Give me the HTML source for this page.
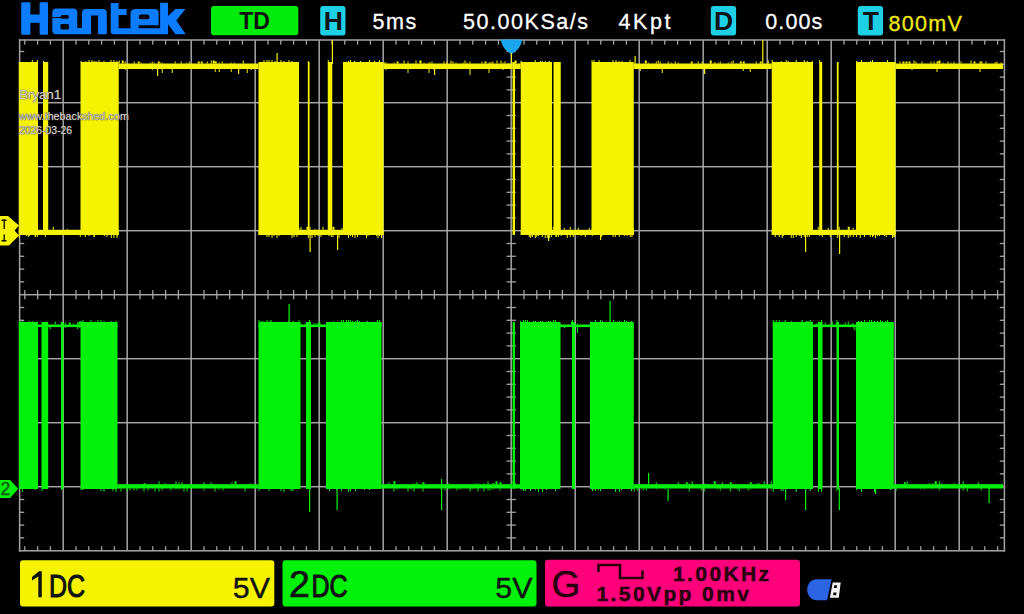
<!DOCTYPE html>
<html><head><meta charset="utf-8"><title>Hantek scope</title>
<style>html,body{margin:0;padding:0;background:#000;width:1024px;height:614px;overflow:hidden}</style>
</head><body><svg width='1024' height='614' viewBox='0 0 1024 614' style='display:block'><g fill='#a4a4a4'><rect x='18.85' y='39.25' width='986.30' height='1.50'/><rect x='18.85' y='550.05' width='986.30' height='1.50'/><rect x='18.85' y='39.25' width='1.50' height='512.30'/><rect x='1003.65' y='39.25' width='1.50' height='512.30'/><rect x='62.45' y='40.00' width='1.50' height='510.80'/><rect x='126.45' y='40.00' width='1.50' height='510.80'/><rect x='190.45' y='40.00' width='1.50' height='510.80'/><rect x='254.45' y='40.00' width='1.50' height='510.80'/><rect x='318.45' y='40.00' width='1.50' height='510.80'/><rect x='382.45' y='40.00' width='1.50' height='510.80'/><rect x='446.45' y='40.00' width='1.50' height='510.80'/><rect x='510.45' y='40.00' width='1.50' height='510.80'/><rect x='574.45' y='40.00' width='1.50' height='510.80'/><rect x='638.45' y='40.00' width='1.50' height='510.80'/><rect x='702.45' y='40.00' width='1.50' height='510.80'/><rect x='766.45' y='40.00' width='1.50' height='510.80'/><rect x='830.45' y='40.00' width='1.50' height='510.80'/><rect x='894.45' y='40.00' width='1.50' height='510.80'/><rect x='958.45' y='40.00' width='1.50' height='510.80'/><rect x='19.60' y='101.95' width='984.80' height='1.50'/><rect x='19.60' y='165.95' width='984.80' height='1.50'/><rect x='19.60' y='229.95' width='984.80' height='1.50'/><rect x='19.60' y='293.95' width='984.80' height='1.50'/><rect x='19.60' y='357.95' width='984.80' height='1.50'/><rect x='19.60' y='421.95' width='984.80' height='1.50'/><rect x='19.60' y='485.95' width='984.80' height='1.50'/><rect x='24.15' y='40.00' width='1.30' height='4.60'/><rect x='24.15' y='546.20' width='1.30' height='4.60'/><rect x='24.15' y='290.10' width='1.30' height='9.20'/><rect x='36.95' y='40.00' width='1.30' height='4.60'/><rect x='36.95' y='546.20' width='1.30' height='4.60'/><rect x='36.95' y='290.10' width='1.30' height='9.20'/><rect x='49.75' y='40.00' width='1.30' height='4.60'/><rect x='49.75' y='546.20' width='1.30' height='4.60'/><rect x='49.75' y='290.10' width='1.30' height='9.20'/><rect x='75.35' y='40.00' width='1.30' height='4.60'/><rect x='75.35' y='546.20' width='1.30' height='4.60'/><rect x='75.35' y='290.10' width='1.30' height='9.20'/><rect x='88.15' y='40.00' width='1.30' height='4.60'/><rect x='88.15' y='546.20' width='1.30' height='4.60'/><rect x='88.15' y='290.10' width='1.30' height='9.20'/><rect x='100.95' y='40.00' width='1.30' height='4.60'/><rect x='100.95' y='546.20' width='1.30' height='4.60'/><rect x='100.95' y='290.10' width='1.30' height='9.20'/><rect x='113.75' y='40.00' width='1.30' height='4.60'/><rect x='113.75' y='546.20' width='1.30' height='4.60'/><rect x='113.75' y='290.10' width='1.30' height='9.20'/><rect x='139.35' y='40.00' width='1.30' height='4.60'/><rect x='139.35' y='546.20' width='1.30' height='4.60'/><rect x='139.35' y='290.10' width='1.30' height='9.20'/><rect x='152.15' y='40.00' width='1.30' height='4.60'/><rect x='152.15' y='546.20' width='1.30' height='4.60'/><rect x='152.15' y='290.10' width='1.30' height='9.20'/><rect x='164.95' y='40.00' width='1.30' height='4.60'/><rect x='164.95' y='546.20' width='1.30' height='4.60'/><rect x='164.95' y='290.10' width='1.30' height='9.20'/><rect x='177.75' y='40.00' width='1.30' height='4.60'/><rect x='177.75' y='546.20' width='1.30' height='4.60'/><rect x='177.75' y='290.10' width='1.30' height='9.20'/><rect x='203.35' y='40.00' width='1.30' height='4.60'/><rect x='203.35' y='546.20' width='1.30' height='4.60'/><rect x='203.35' y='290.10' width='1.30' height='9.20'/><rect x='216.15' y='40.00' width='1.30' height='4.60'/><rect x='216.15' y='546.20' width='1.30' height='4.60'/><rect x='216.15' y='290.10' width='1.30' height='9.20'/><rect x='228.95' y='40.00' width='1.30' height='4.60'/><rect x='228.95' y='546.20' width='1.30' height='4.60'/><rect x='228.95' y='290.10' width='1.30' height='9.20'/><rect x='241.75' y='40.00' width='1.30' height='4.60'/><rect x='241.75' y='546.20' width='1.30' height='4.60'/><rect x='241.75' y='290.10' width='1.30' height='9.20'/><rect x='267.35' y='40.00' width='1.30' height='4.60'/><rect x='267.35' y='546.20' width='1.30' height='4.60'/><rect x='267.35' y='290.10' width='1.30' height='9.20'/><rect x='280.15' y='40.00' width='1.30' height='4.60'/><rect x='280.15' y='546.20' width='1.30' height='4.60'/><rect x='280.15' y='290.10' width='1.30' height='9.20'/><rect x='292.95' y='40.00' width='1.30' height='4.60'/><rect x='292.95' y='546.20' width='1.30' height='4.60'/><rect x='292.95' y='290.10' width='1.30' height='9.20'/><rect x='305.75' y='40.00' width='1.30' height='4.60'/><rect x='305.75' y='546.20' width='1.30' height='4.60'/><rect x='305.75' y='290.10' width='1.30' height='9.20'/><rect x='331.35' y='40.00' width='1.30' height='4.60'/><rect x='331.35' y='546.20' width='1.30' height='4.60'/><rect x='331.35' y='290.10' width='1.30' height='9.20'/><rect x='344.15' y='40.00' width='1.30' height='4.60'/><rect x='344.15' y='546.20' width='1.30' height='4.60'/><rect x='344.15' y='290.10' width='1.30' height='9.20'/><rect x='356.95' y='40.00' width='1.30' height='4.60'/><rect x='356.95' y='546.20' width='1.30' height='4.60'/><rect x='356.95' y='290.10' width='1.30' height='9.20'/><rect x='369.75' y='40.00' width='1.30' height='4.60'/><rect x='369.75' y='546.20' width='1.30' height='4.60'/><rect x='369.75' y='290.10' width='1.30' height='9.20'/><rect x='395.35' y='40.00' width='1.30' height='4.60'/><rect x='395.35' y='546.20' width='1.30' height='4.60'/><rect x='395.35' y='290.10' width='1.30' height='9.20'/><rect x='408.15' y='40.00' width='1.30' height='4.60'/><rect x='408.15' y='546.20' width='1.30' height='4.60'/><rect x='408.15' y='290.10' width='1.30' height='9.20'/><rect x='420.95' y='40.00' width='1.30' height='4.60'/><rect x='420.95' y='546.20' width='1.30' height='4.60'/><rect x='420.95' y='290.10' width='1.30' height='9.20'/><rect x='433.75' y='40.00' width='1.30' height='4.60'/><rect x='433.75' y='546.20' width='1.30' height='4.60'/><rect x='433.75' y='290.10' width='1.30' height='9.20'/><rect x='459.35' y='40.00' width='1.30' height='4.60'/><rect x='459.35' y='546.20' width='1.30' height='4.60'/><rect x='459.35' y='290.10' width='1.30' height='9.20'/><rect x='472.15' y='40.00' width='1.30' height='4.60'/><rect x='472.15' y='546.20' width='1.30' height='4.60'/><rect x='472.15' y='290.10' width='1.30' height='9.20'/><rect x='484.95' y='40.00' width='1.30' height='4.60'/><rect x='484.95' y='546.20' width='1.30' height='4.60'/><rect x='484.95' y='290.10' width='1.30' height='9.20'/><rect x='497.75' y='40.00' width='1.30' height='4.60'/><rect x='497.75' y='546.20' width='1.30' height='4.60'/><rect x='497.75' y='290.10' width='1.30' height='9.20'/><rect x='523.35' y='40.00' width='1.30' height='4.60'/><rect x='523.35' y='546.20' width='1.30' height='4.60'/><rect x='523.35' y='290.10' width='1.30' height='9.20'/><rect x='536.15' y='40.00' width='1.30' height='4.60'/><rect x='536.15' y='546.20' width='1.30' height='4.60'/><rect x='536.15' y='290.10' width='1.30' height='9.20'/><rect x='548.95' y='40.00' width='1.30' height='4.60'/><rect x='548.95' y='546.20' width='1.30' height='4.60'/><rect x='548.95' y='290.10' width='1.30' height='9.20'/><rect x='561.75' y='40.00' width='1.30' height='4.60'/><rect x='561.75' y='546.20' width='1.30' height='4.60'/><rect x='561.75' y='290.10' width='1.30' height='9.20'/><rect x='587.35' y='40.00' width='1.30' height='4.60'/><rect x='587.35' y='546.20' width='1.30' height='4.60'/><rect x='587.35' y='290.10' width='1.30' height='9.20'/><rect x='600.15' y='40.00' width='1.30' height='4.60'/><rect x='600.15' y='546.20' width='1.30' height='4.60'/><rect x='600.15' y='290.10' width='1.30' height='9.20'/><rect x='612.95' y='40.00' width='1.30' height='4.60'/><rect x='612.95' y='546.20' width='1.30' height='4.60'/><rect x='612.95' y='290.10' width='1.30' height='9.20'/><rect x='625.75' y='40.00' width='1.30' height='4.60'/><rect x='625.75' y='546.20' width='1.30' height='4.60'/><rect x='625.75' y='290.10' width='1.30' height='9.20'/><rect x='651.35' y='40.00' width='1.30' height='4.60'/><rect x='651.35' y='546.20' width='1.30' height='4.60'/><rect x='651.35' y='290.10' width='1.30' height='9.20'/><rect x='664.15' y='40.00' width='1.30' height='4.60'/><rect x='664.15' y='546.20' width='1.30' height='4.60'/><rect x='664.15' y='290.10' width='1.30' height='9.20'/><rect x='676.95' y='40.00' width='1.30' height='4.60'/><rect x='676.95' y='546.20' width='1.30' height='4.60'/><rect x='676.95' y='290.10' width='1.30' height='9.20'/><rect x='689.75' y='40.00' width='1.30' height='4.60'/><rect x='689.75' y='546.20' width='1.30' height='4.60'/><rect x='689.75' y='290.10' width='1.30' height='9.20'/><rect x='715.35' y='40.00' width='1.30' height='4.60'/><rect x='715.35' y='546.20' width='1.30' height='4.60'/><rect x='715.35' y='290.10' width='1.30' height='9.20'/><rect x='728.15' y='40.00' width='1.30' height='4.60'/><rect x='728.15' y='546.20' width='1.30' height='4.60'/><rect x='728.15' y='290.10' width='1.30' height='9.20'/><rect x='740.95' y='40.00' width='1.30' height='4.60'/><rect x='740.95' y='546.20' width='1.30' height='4.60'/><rect x='740.95' y='290.10' width='1.30' height='9.20'/><rect x='753.75' y='40.00' width='1.30' height='4.60'/><rect x='753.75' y='546.20' width='1.30' height='4.60'/><rect x='753.75' y='290.10' width='1.30' height='9.20'/><rect x='779.35' y='40.00' width='1.30' height='4.60'/><rect x='779.35' y='546.20' width='1.30' height='4.60'/><rect x='779.35' y='290.10' width='1.30' height='9.20'/><rect x='792.15' y='40.00' width='1.30' height='4.60'/><rect x='792.15' y='546.20' width='1.30' height='4.60'/><rect x='792.15' y='290.10' width='1.30' height='9.20'/><rect x='804.95' y='40.00' width='1.30' height='4.60'/><rect x='804.95' y='546.20' width='1.30' height='4.60'/><rect x='804.95' y='290.10' width='1.30' height='9.20'/><rect x='817.75' y='40.00' width='1.30' height='4.60'/><rect x='817.75' y='546.20' width='1.30' height='4.60'/><rect x='817.75' y='290.10' width='1.30' height='9.20'/><rect x='843.35' y='40.00' width='1.30' height='4.60'/><rect x='843.35' y='546.20' width='1.30' height='4.60'/><rect x='843.35' y='290.10' width='1.30' height='9.20'/><rect x='856.15' y='40.00' width='1.30' height='4.60'/><rect x='856.15' y='546.20' width='1.30' height='4.60'/><rect x='856.15' y='290.10' width='1.30' height='9.20'/><rect x='868.95' y='40.00' width='1.30' height='4.60'/><rect x='868.95' y='546.20' width='1.30' height='4.60'/><rect x='868.95' y='290.10' width='1.30' height='9.20'/><rect x='881.75' y='40.00' width='1.30' height='4.60'/><rect x='881.75' y='546.20' width='1.30' height='4.60'/><rect x='881.75' y='290.10' width='1.30' height='9.20'/><rect x='907.35' y='40.00' width='1.30' height='4.60'/><rect x='907.35' y='546.20' width='1.30' height='4.60'/><rect x='907.35' y='290.10' width='1.30' height='9.20'/><rect x='920.15' y='40.00' width='1.30' height='4.60'/><rect x='920.15' y='546.20' width='1.30' height='4.60'/><rect x='920.15' y='290.10' width='1.30' height='9.20'/><rect x='932.95' y='40.00' width='1.30' height='4.60'/><rect x='932.95' y='546.20' width='1.30' height='4.60'/><rect x='932.95' y='290.10' width='1.30' height='9.20'/><rect x='945.75' y='40.00' width='1.30' height='4.60'/><rect x='945.75' y='546.20' width='1.30' height='4.60'/><rect x='945.75' y='290.10' width='1.30' height='9.20'/><rect x='971.35' y='40.00' width='1.30' height='4.60'/><rect x='971.35' y='546.20' width='1.30' height='4.60'/><rect x='971.35' y='290.10' width='1.30' height='9.20'/><rect x='984.15' y='40.00' width='1.30' height='4.60'/><rect x='984.15' y='546.20' width='1.30' height='4.60'/><rect x='984.15' y='290.10' width='1.30' height='9.20'/><rect x='996.95' y='40.00' width='1.30' height='4.60'/><rect x='996.95' y='546.20' width='1.30' height='4.60'/><rect x='996.95' y='290.10' width='1.30' height='9.20'/><rect x='19.60' y='50.85' width='4.60' height='1.30'/><rect x='999.80' y='50.85' width='4.60' height='1.30'/><rect x='506.60' y='50.85' width='9.20' height='1.30'/><rect x='19.60' y='63.65' width='4.60' height='1.30'/><rect x='999.80' y='63.65' width='4.60' height='1.30'/><rect x='506.60' y='63.65' width='9.20' height='1.30'/><rect x='19.60' y='76.45' width='4.60' height='1.30'/><rect x='999.80' y='76.45' width='4.60' height='1.30'/><rect x='506.60' y='76.45' width='9.20' height='1.30'/><rect x='19.60' y='89.25' width='4.60' height='1.30'/><rect x='999.80' y='89.25' width='4.60' height='1.30'/><rect x='506.60' y='89.25' width='9.20' height='1.30'/><rect x='19.60' y='114.85' width='4.60' height='1.30'/><rect x='999.80' y='114.85' width='4.60' height='1.30'/><rect x='506.60' y='114.85' width='9.20' height='1.30'/><rect x='19.60' y='127.65' width='4.60' height='1.30'/><rect x='999.80' y='127.65' width='4.60' height='1.30'/><rect x='506.60' y='127.65' width='9.20' height='1.30'/><rect x='19.60' y='140.45' width='4.60' height='1.30'/><rect x='999.80' y='140.45' width='4.60' height='1.30'/><rect x='506.60' y='140.45' width='9.20' height='1.30'/><rect x='19.60' y='153.25' width='4.60' height='1.30'/><rect x='999.80' y='153.25' width='4.60' height='1.30'/><rect x='506.60' y='153.25' width='9.20' height='1.30'/><rect x='19.60' y='178.85' width='4.60' height='1.30'/><rect x='999.80' y='178.85' width='4.60' height='1.30'/><rect x='506.60' y='178.85' width='9.20' height='1.30'/><rect x='19.60' y='191.65' width='4.60' height='1.30'/><rect x='999.80' y='191.65' width='4.60' height='1.30'/><rect x='506.60' y='191.65' width='9.20' height='1.30'/><rect x='19.60' y='204.45' width='4.60' height='1.30'/><rect x='999.80' y='204.45' width='4.60' height='1.30'/><rect x='506.60' y='204.45' width='9.20' height='1.30'/><rect x='19.60' y='217.25' width='4.60' height='1.30'/><rect x='999.80' y='217.25' width='4.60' height='1.30'/><rect x='506.60' y='217.25' width='9.20' height='1.30'/><rect x='19.60' y='242.85' width='4.60' height='1.30'/><rect x='999.80' y='242.85' width='4.60' height='1.30'/><rect x='506.60' y='242.85' width='9.20' height='1.30'/><rect x='19.60' y='255.65' width='4.60' height='1.30'/><rect x='999.80' y='255.65' width='4.60' height='1.30'/><rect x='506.60' y='255.65' width='9.20' height='1.30'/><rect x='19.60' y='268.45' width='4.60' height='1.30'/><rect x='999.80' y='268.45' width='4.60' height='1.30'/><rect x='506.60' y='268.45' width='9.20' height='1.30'/><rect x='19.60' y='281.25' width='4.60' height='1.30'/><rect x='999.80' y='281.25' width='4.60' height='1.30'/><rect x='506.60' y='281.25' width='9.20' height='1.30'/><rect x='19.60' y='306.85' width='4.60' height='1.30'/><rect x='999.80' y='306.85' width='4.60' height='1.30'/><rect x='506.60' y='306.85' width='9.20' height='1.30'/><rect x='19.60' y='319.65' width='4.60' height='1.30'/><rect x='999.80' y='319.65' width='4.60' height='1.30'/><rect x='506.60' y='319.65' width='9.20' height='1.30'/><rect x='19.60' y='332.45' width='4.60' height='1.30'/><rect x='999.80' y='332.45' width='4.60' height='1.30'/><rect x='506.60' y='332.45' width='9.20' height='1.30'/><rect x='19.60' y='345.25' width='4.60' height='1.30'/><rect x='999.80' y='345.25' width='4.60' height='1.30'/><rect x='506.60' y='345.25' width='9.20' height='1.30'/><rect x='19.60' y='370.85' width='4.60' height='1.30'/><rect x='999.80' y='370.85' width='4.60' height='1.30'/><rect x='506.60' y='370.85' width='9.20' height='1.30'/><rect x='19.60' y='383.65' width='4.60' height='1.30'/><rect x='999.80' y='383.65' width='4.60' height='1.30'/><rect x='506.60' y='383.65' width='9.20' height='1.30'/><rect x='19.60' y='396.45' width='4.60' height='1.30'/><rect x='999.80' y='396.45' width='4.60' height='1.30'/><rect x='506.60' y='396.45' width='9.20' height='1.30'/><rect x='19.60' y='409.25' width='4.60' height='1.30'/><rect x='999.80' y='409.25' width='4.60' height='1.30'/><rect x='506.60' y='409.25' width='9.20' height='1.30'/><rect x='19.60' y='434.85' width='4.60' height='1.30'/><rect x='999.80' y='434.85' width='4.60' height='1.30'/><rect x='506.60' y='434.85' width='9.20' height='1.30'/><rect x='19.60' y='447.65' width='4.60' height='1.30'/><rect x='999.80' y='447.65' width='4.60' height='1.30'/><rect x='506.60' y='447.65' width='9.20' height='1.30'/><rect x='19.60' y='460.45' width='4.60' height='1.30'/><rect x='999.80' y='460.45' width='4.60' height='1.30'/><rect x='506.60' y='460.45' width='9.20' height='1.30'/><rect x='19.60' y='473.25' width='4.60' height='1.30'/><rect x='999.80' y='473.25' width='4.60' height='1.30'/><rect x='506.60' y='473.25' width='9.20' height='1.30'/><rect x='19.60' y='498.85' width='4.60' height='1.30'/><rect x='999.80' y='498.85' width='4.60' height='1.30'/><rect x='506.60' y='498.85' width='9.20' height='1.30'/><rect x='19.60' y='511.65' width='4.60' height='1.30'/><rect x='999.80' y='511.65' width='4.60' height='1.30'/><rect x='506.60' y='511.65' width='9.20' height='1.30'/><rect x='19.60' y='524.45' width='4.60' height='1.30'/><rect x='999.80' y='524.45' width='4.60' height='1.30'/><rect x='506.60' y='524.45' width='9.20' height='1.30'/><rect x='19.60' y='537.25' width='4.60' height='1.30'/><rect x='999.80' y='537.25' width='4.60' height='1.30'/><rect x='506.60' y='537.25' width='9.20' height='1.30'/></g><g fill='#f5f300'><rect x='118.75' y='63.50' width='139.75' height='5.50'/><rect x='118.75' y='60.50' width='1.00' height='3.00'/><rect x='121.75' y='60.50' width='2.00' height='3.00'/><rect x='124.75' y='61.50' width='1.00' height='2.00'/><rect x='124.75' y='69.00' width='1.00' height='1.00'/><rect x='133.75' y='61.50' width='1.00' height='2.00'/><rect x='137.75' y='61.50' width='2.00' height='2.00'/><rect x='140.75' y='62.50' width='1.00' height='1.00'/><rect x='149.75' y='62.50' width='1.00' height='1.00'/><rect x='151.75' y='61.50' width='1.00' height='2.00'/><rect x='151.75' y='69.00' width='1.00' height='1.00'/><rect x='153.75' y='62.50' width='1.00' height='1.00'/><rect x='157.75' y='61.50' width='2.00' height='2.00'/><rect x='159.75' y='62.50' width='1.00' height='1.00'/><rect x='161.75' y='62.50' width='1.00' height='1.00'/><rect x='161.75' y='69.00' width='1.00' height='4.00'/><rect x='171.75' y='69.00' width='1.00' height='4.00'/><rect x='174.75' y='61.50' width='1.00' height='2.00'/><rect x='180.75' y='61.50' width='1.00' height='2.00'/><rect x='185.75' y='62.50' width='1.00' height='1.00'/><rect x='188.75' y='61.50' width='1.00' height='2.00'/><rect x='197.75' y='61.50' width='2.00' height='2.00'/><rect x='200.75' y='61.50' width='2.00' height='2.00'/><rect x='206.75' y='61.50' width='1.00' height='2.00'/><rect x='210.75' y='60.50' width='1.00' height='3.00'/><rect x='212.75' y='60.50' width='2.00' height='3.00'/><rect x='214.75' y='61.50' width='2.00' height='2.00'/><rect x='214.75' y='69.00' width='1.00' height='3.00'/><rect x='218.75' y='62.50' width='1.00' height='1.00'/><rect x='218.75' y='69.00' width='1.00' height='3.00'/><rect x='221.75' y='61.50' width='1.00' height='2.00'/><rect x='230.75' y='62.50' width='1.00' height='1.00'/><rect x='230.75' y='69.00' width='1.00' height='3.00'/><rect x='233.75' y='62.50' width='1.00' height='1.00'/><rect x='242.75' y='60.50' width='1.00' height='3.00'/><rect x='246.75' y='69.00' width='1.00' height='4.00'/><rect x='250.75' y='69.00' width='1.00' height='1.00'/><rect x='383.50' y='63.50' width='129.10' height='5.50'/><rect x='383.50' y='62.50' width='2.00' height='1.00'/><rect x='385.50' y='62.50' width='1.00' height='1.00'/><rect x='385.50' y='69.00' width='1.00' height='1.00'/><rect x='393.50' y='62.50' width='1.00' height='1.00'/><rect x='396.50' y='61.50' width='2.00' height='2.00'/><rect x='403.50' y='60.50' width='1.00' height='3.00'/><rect x='407.50' y='61.50' width='1.00' height='2.00'/><rect x='407.50' y='69.00' width='1.00' height='4.00'/><rect x='415.50' y='60.50' width='1.00' height='3.00'/><rect x='419.50' y='60.50' width='2.00' height='3.00'/><rect x='423.50' y='62.50' width='1.00' height='1.00'/><rect x='428.50' y='62.50' width='2.00' height='1.00'/><rect x='428.50' y='69.00' width='1.00' height='4.00'/><rect x='431.50' y='61.50' width='1.00' height='2.00'/><rect x='433.50' y='69.00' width='1.00' height='1.00'/><rect x='443.50' y='61.50' width='1.00' height='2.00'/><rect x='446.50' y='61.50' width='1.00' height='2.00'/><rect x='450.50' y='60.50' width='1.00' height='3.00'/><rect x='452.50' y='61.50' width='1.00' height='2.00'/><rect x='455.50' y='62.50' width='1.00' height='1.00'/><rect x='462.50' y='62.50' width='1.00' height='1.00'/><rect x='464.50' y='60.50' width='1.00' height='3.00'/><rect x='466.50' y='62.50' width='1.00' height='1.00'/><rect x='469.50' y='61.50' width='1.00' height='2.00'/><rect x='469.50' y='69.00' width='1.00' height='6.00'/><rect x='481.50' y='61.50' width='1.00' height='2.00'/><rect x='484.50' y='61.50' width='2.00' height='2.00'/><rect x='488.50' y='62.50' width='2.00' height='1.00'/><rect x='488.50' y='69.00' width='1.00' height='4.00'/><rect x='490.50' y='62.50' width='2.00' height='1.00'/><rect x='492.50' y='61.50' width='1.00' height='2.00'/><rect x='496.50' y='60.50' width='1.00' height='3.00'/><rect x='500.50' y='60.50' width='1.00' height='3.00'/><rect x='502.50' y='62.50' width='1.00' height='1.00'/><rect x='502.50' y='69.00' width='1.00' height='1.00'/><rect x='504.50' y='61.50' width='1.00' height='2.00'/><rect x='511.50' y='62.50' width='2.00' height='1.00'/><rect x='512.60' y='63.50' width='8.15' height='5.50'/><rect x='514.60' y='60.50' width='2.00' height='3.00'/><rect x='520.60' y='61.50' width='1.00' height='2.00'/><rect x='633.75' y='63.50' width='138.00' height='5.50'/><rect x='639.75' y='69.00' width='1.00' height='2.00'/><rect x='644.75' y='60.50' width='2.00' height='3.00'/><rect x='647.75' y='62.50' width='1.00' height='1.00'/><rect x='655.75' y='61.50' width='1.00' height='2.00'/><rect x='657.75' y='60.50' width='1.00' height='3.00'/><rect x='659.75' y='61.50' width='1.00' height='2.00'/><rect x='661.75' y='69.00' width='1.00' height='4.00'/><rect x='667.75' y='61.50' width='1.00' height='2.00'/><rect x='670.75' y='62.50' width='1.00' height='1.00'/><rect x='674.75' y='61.50' width='1.00' height='2.00'/><rect x='677.75' y='62.50' width='1.00' height='1.00'/><rect x='690.75' y='61.50' width='2.00' height='2.00'/><rect x='697.75' y='61.50' width='1.00' height='2.00'/><rect x='701.75' y='61.50' width='1.00' height='2.00'/><rect x='709.75' y='60.50' width='2.00' height='3.00'/><rect x='713.75' y='62.50' width='2.00' height='1.00'/><rect x='717.75' y='62.50' width='1.00' height='1.00'/><rect x='719.75' y='61.50' width='1.00' height='2.00'/><rect x='727.75' y='62.50' width='1.00' height='1.00'/><rect x='730.75' y='61.50' width='1.00' height='2.00'/><rect x='732.75' y='60.50' width='1.00' height='3.00'/><rect x='739.75' y='61.50' width='2.00' height='2.00'/><rect x='742.75' y='61.50' width='2.00' height='2.00'/><rect x='742.75' y='69.00' width='1.00' height='2.00'/><rect x='749.75' y='69.00' width='1.00' height='3.00'/><rect x='755.75' y='61.50' width='1.00' height='2.00'/><rect x='759.75' y='61.50' width='2.00' height='2.00'/><rect x='767.75' y='60.50' width='1.00' height='3.00'/><rect x='895.50' y='63.50' width='107.50' height='5.50'/><rect x='899.50' y='61.50' width='1.00' height='2.00'/><rect x='902.50' y='61.50' width='2.00' height='2.00'/><rect x='905.50' y='61.50' width='2.00' height='2.00'/><rect x='908.50' y='61.50' width='2.00' height='2.00'/><rect x='911.50' y='69.00' width='1.00' height='1.00'/><rect x='913.50' y='60.50' width='1.00' height='3.00'/><rect x='915.50' y='61.50' width='1.00' height='2.00'/><rect x='921.50' y='61.50' width='1.00' height='2.00'/><rect x='930.50' y='61.50' width='1.00' height='2.00'/><rect x='933.50' y='61.50' width='1.00' height='2.00'/><rect x='936.50' y='61.50' width='2.00' height='2.00'/><rect x='936.50' y='69.00' width='1.00' height='3.00'/><rect x='938.50' y='60.50' width='2.00' height='3.00'/><rect x='942.50' y='62.50' width='1.00' height='1.00'/><rect x='947.50' y='61.50' width='1.00' height='2.00'/><rect x='950.50' y='62.50' width='1.00' height='1.00'/><rect x='953.50' y='61.50' width='1.00' height='2.00'/><rect x='960.50' y='61.50' width='1.00' height='2.00'/><rect x='970.50' y='60.50' width='1.00' height='3.00'/><rect x='973.50' y='61.50' width='2.00' height='2.00'/><rect x='979.50' y='61.50' width='2.00' height='2.00'/><rect x='979.50' y='69.00' width='1.00' height='3.00'/><rect x='981.50' y='61.50' width='1.00' height='2.00'/><rect x='985.50' y='61.50' width='1.00' height='2.00'/><rect x='994.50' y='62.50' width='2.00' height='1.00'/><rect x='996.50' y='61.50' width='1.00' height='2.00'/><rect x='1000.50' y='62.50' width='1.00' height='1.00'/><rect x='18.80' y='229.80' width='99.95' height='5.20'/><rect x='18.80' y='228.80' width='2.00' height='1.00'/><rect x='22.80' y='227.80' width='1.00' height='2.00'/><rect x='25.80' y='235.00' width='1.00' height='1.00'/><rect x='27.80' y='235.00' width='1.00' height='2.00'/><rect x='34.80' y='235.00' width='1.00' height='2.00'/><rect x='34.80' y='228.80' width='2.00' height='1.00'/><rect x='44.80' y='235.00' width='1.00' height='2.00'/><rect x='52.80' y='226.80' width='1.00' height='3.00'/><rect x='66.80' y='228.80' width='1.00' height='1.00'/><rect x='79.80' y='235.00' width='1.00' height='2.00'/><rect x='82.80' y='226.80' width='1.00' height='3.00'/><rect x='84.80' y='235.00' width='1.00' height='2.00'/><rect x='93.80' y='235.00' width='1.00' height='2.00'/><rect x='103.80' y='235.00' width='1.00' height='1.00'/><rect x='107.80' y='228.80' width='2.00' height='1.00'/><rect x='110.80' y='235.00' width='1.00' height='3.00'/><rect x='112.80' y='227.80' width='2.00' height='2.00'/><rect x='116.80' y='235.00' width='1.00' height='1.00'/><rect x='258.50' y='229.80' width='125.00' height='5.20'/><rect x='261.50' y='226.80' width='1.00' height='3.00'/><rect x='266.50' y='235.00' width='1.00' height='2.00'/><rect x='268.50' y='235.00' width='1.00' height='2.00'/><rect x='273.50' y='235.00' width='1.00' height='1.00'/><rect x='273.50' y='226.80' width='2.00' height='3.00'/><rect x='276.50' y='235.00' width='1.00' height='3.00'/><rect x='276.50' y='227.80' width='2.00' height='2.00'/><rect x='278.50' y='235.00' width='1.00' height='1.00'/><rect x='278.50' y='228.80' width='1.00' height='1.00'/><rect x='282.50' y='227.80' width='2.00' height='2.00'/><rect x='296.50' y='235.00' width='1.00' height='2.00'/><rect x='296.50' y='226.80' width='1.00' height='3.00'/><rect x='298.50' y='227.80' width='1.00' height='2.00'/><rect x='300.50' y='226.80' width='1.00' height='3.00'/><rect x='306.50' y='226.80' width='2.00' height='3.00'/><rect x='309.50' y='226.80' width='1.00' height='3.00'/><rect x='311.50' y='235.00' width='1.00' height='3.00'/><rect x='314.50' y='235.00' width='1.00' height='2.00'/><rect x='314.50' y='228.80' width='1.00' height='1.00'/><rect x='317.50' y='235.00' width='1.00' height='1.00'/><rect x='320.50' y='235.00' width='1.00' height='2.00'/><rect x='322.50' y='226.80' width='1.00' height='3.00'/><rect x='328.50' y='235.00' width='1.00' height='1.00'/><rect x='332.50' y='235.00' width='1.00' height='2.00'/><rect x='332.50' y='226.80' width='2.00' height='3.00'/><rect x='338.50' y='235.00' width='1.00' height='3.00'/><rect x='341.50' y='227.80' width='1.00' height='2.00'/><rect x='344.50' y='226.80' width='1.00' height='3.00'/><rect x='346.50' y='226.80' width='1.00' height='3.00'/><rect x='354.50' y='235.00' width='1.00' height='3.00'/><rect x='362.50' y='228.80' width='2.00' height='1.00'/><rect x='367.50' y='235.00' width='1.00' height='1.00'/><rect x='367.50' y='226.80' width='1.00' height='3.00'/><rect x='377.50' y='235.00' width='1.00' height='3.00'/><rect x='377.50' y='227.80' width='1.00' height='2.00'/><rect x='520.75' y='229.80' width='113.00' height='5.20'/><rect x='529.75' y='235.00' width='1.00' height='3.00'/><rect x='531.75' y='235.00' width='1.00' height='2.00'/><rect x='531.75' y='226.80' width='2.00' height='3.00'/><rect x='535.75' y='235.00' width='1.00' height='2.00'/><rect x='537.75' y='235.00' width='1.00' height='1.00'/><rect x='544.75' y='227.80' width='1.00' height='2.00'/><rect x='548.75' y='227.80' width='1.00' height='2.00'/><rect x='552.75' y='226.80' width='1.00' height='3.00'/><rect x='555.75' y='235.00' width='1.00' height='2.00'/><rect x='557.75' y='235.00' width='1.00' height='2.00'/><rect x='560.75' y='235.00' width='1.00' height='1.00'/><rect x='563.75' y='227.80' width='1.00' height='2.00'/><rect x='566.75' y='235.00' width='1.00' height='3.00'/><rect x='569.75' y='235.00' width='1.00' height='2.00'/><rect x='569.75' y='226.80' width='1.00' height='3.00'/><rect x='572.75' y='235.00' width='1.00' height='2.00'/><rect x='577.75' y='227.80' width='1.00' height='2.00'/><rect x='580.75' y='235.00' width='1.00' height='1.00'/><rect x='584.75' y='235.00' width='1.00' height='2.00'/><rect x='588.75' y='227.80' width='1.00' height='2.00'/><rect x='591.75' y='235.00' width='1.00' height='1.00'/><rect x='591.75' y='228.80' width='1.00' height='1.00'/><rect x='600.75' y='235.00' width='1.00' height='2.00'/><rect x='600.75' y='227.80' width='1.00' height='2.00'/><rect x='608.75' y='227.80' width='2.00' height='2.00'/><rect x='614.75' y='235.00' width='1.00' height='2.00'/><rect x='618.75' y='235.00' width='1.00' height='2.00'/><rect x='623.75' y='235.00' width='1.00' height='1.00'/><rect x='629.75' y='235.00' width='1.00' height='2.00'/><rect x='632.75' y='227.80' width='1.00' height='2.00'/><rect x='771.75' y='229.80' width='123.75' height='5.20'/><rect x='777.75' y='227.80' width='2.00' height='2.00'/><rect x='781.75' y='235.00' width='1.00' height='3.00'/><rect x='790.75' y='235.00' width='1.00' height='3.00'/><rect x='792.75' y='235.00' width='1.00' height='3.00'/><rect x='795.75' y='235.00' width='1.00' height='2.00'/><rect x='800.75' y='235.00' width='1.00' height='1.00'/><rect x='803.75' y='228.80' width='1.00' height='1.00'/><rect x='806.75' y='235.00' width='1.00' height='2.00'/><rect x='806.75' y='227.80' width='2.00' height='2.00'/><rect x='817.75' y='226.80' width='1.00' height='3.00'/><rect x='821.75' y='235.00' width='1.00' height='2.00'/><rect x='827.75' y='227.80' width='1.00' height='2.00'/><rect x='829.75' y='235.00' width='1.00' height='2.00'/><rect x='838.75' y='235.00' width='1.00' height='2.00'/><rect x='838.75' y='226.80' width='1.00' height='3.00'/><rect x='843.75' y='235.00' width='1.00' height='2.00'/><rect x='847.75' y='235.00' width='1.00' height='3.00'/><rect x='847.75' y='226.80' width='2.00' height='3.00'/><rect x='849.75' y='235.00' width='1.00' height='2.00'/><rect x='852.75' y='235.00' width='1.00' height='2.00'/><rect x='852.75' y='227.80' width='1.00' height='2.00'/><rect x='859.75' y='235.00' width='1.00' height='3.00'/><rect x='869.75' y='235.00' width='1.00' height='2.00'/><rect x='872.75' y='235.00' width='1.00' height='1.00'/><rect x='879.75' y='228.80' width='2.00' height='1.00'/><rect x='885.75' y='235.00' width='1.00' height='2.00'/><rect x='885.75' y='227.80' width='1.00' height='2.00'/><rect x='892.75' y='235.00' width='1.00' height='2.00'/><rect x='892.75' y='227.80' width='1.00' height='2.00'/><rect x='18.80' y='62.00' width='19.20' height='173.00'/><rect x='18.80' y='235.00' width='1.00' height='3.00'/><rect x='28.80' y='235.00' width='1.00' height='1.00'/><rect x='31.80' y='60.00' width='1.00' height='2.00'/><rect x='34.80' y='235.00' width='1.00' height='2.00'/><rect x='36.80' y='60.00' width='1.00' height='2.00'/><rect x='36.80' y='235.00' width='1.00' height='2.00'/><rect x='43.00' y='62.00' width='5.20' height='173.00'/><rect x='43.00' y='61.00' width='1.00' height='1.00'/><rect x='80.50' y='62.00' width='38.25' height='173.00'/><rect x='80.50' y='61.00' width='1.00' height='1.00'/><rect x='85.50' y='61.00' width='1.00' height='1.00'/><rect x='88.50' y='60.00' width='1.00' height='2.00'/><rect x='88.50' y='235.00' width='1.00' height='1.00'/><rect x='91.50' y='60.00' width='1.00' height='2.00'/><rect x='93.50' y='61.00' width='1.00' height='1.00'/><rect x='93.50' y='235.00' width='1.00' height='2.00'/><rect x='95.50' y='61.00' width='1.00' height='1.00'/><rect x='98.50' y='60.00' width='1.00' height='2.00'/><rect x='103.50' y='61.00' width='1.00' height='1.00'/><rect x='106.50' y='235.00' width='1.00' height='2.00'/><rect x='110.50' y='60.00' width='1.00' height='2.00'/><rect x='113.50' y='60.00' width='1.00' height='2.00'/><rect x='113.50' y='235.00' width='1.00' height='3.00'/><rect x='116.50' y='61.00' width='1.00' height='1.00'/><rect x='116.50' y='235.00' width='1.00' height='3.00'/><rect x='258.50' y='62.00' width='40.50' height='173.00'/><rect x='263.50' y='60.00' width='1.00' height='2.00'/><rect x='266.50' y='60.00' width='1.00' height='2.00'/><rect x='268.50' y='60.00' width='1.00' height='2.00'/><rect x='271.50' y='60.00' width='1.00' height='2.00'/><rect x='271.50' y='235.00' width='1.00' height='3.00'/><rect x='274.50' y='61.00' width='1.00' height='1.00'/><rect x='280.50' y='60.00' width='1.00' height='2.00'/><rect x='283.50' y='61.00' width='1.00' height='1.00'/><rect x='288.50' y='60.00' width='1.00' height='2.00'/><rect x='291.50' y='61.00' width='1.00' height='1.00'/><rect x='291.50' y='235.00' width='1.00' height='3.00'/><rect x='293.50' y='235.00' width='1.00' height='2.00'/><rect x='307.80' y='62.00' width='1.80' height='173.00'/><rect x='307.80' y='61.00' width='1.00' height='1.00'/><rect x='307.80' y='235.00' width='1.00' height='3.00'/><rect x='327.75' y='62.00' width='4.50' height='173.00'/><rect x='327.75' y='60.00' width='1.00' height='2.00'/><rect x='330.75' y='235.00' width='1.00' height='2.00'/><rect x='343.00' y='62.00' width='40.50' height='173.00'/><rect x='348.00' y='61.00' width='1.00' height='1.00'/><rect x='348.00' y='235.00' width='1.00' height='3.00'/><rect x='350.00' y='60.00' width='1.00' height='2.00'/><rect x='350.00' y='235.00' width='1.00' height='1.00'/><rect x='352.00' y='235.00' width='1.00' height='2.00'/><rect x='354.00' y='61.00' width='1.00' height='1.00'/><rect x='357.00' y='235.00' width='1.00' height='2.00'/><rect x='360.00' y='61.00' width='1.00' height='1.00'/><rect x='366.00' y='235.00' width='1.00' height='3.00'/><rect x='369.00' y='60.00' width='1.00' height='2.00'/><rect x='374.00' y='61.00' width='1.00' height='1.00'/><rect x='376.00' y='235.00' width='1.00' height='1.00'/><rect x='379.00' y='60.00' width='1.00' height='2.00'/><rect x='379.00' y='235.00' width='1.00' height='1.00'/><rect x='381.00' y='235.00' width='1.00' height='3.00'/><rect x='512.60' y='62.00' width='2.40' height='173.00'/><rect x='520.75' y='62.00' width='31.25' height='173.00'/><rect x='520.75' y='61.00' width='1.00' height='1.00'/><rect x='528.75' y='235.00' width='1.00' height='2.00'/><rect x='531.75' y='235.00' width='1.00' height='2.00'/><rect x='534.75' y='60.00' width='1.00' height='2.00'/><rect x='534.75' y='235.00' width='1.00' height='3.00'/><rect x='537.75' y='235.00' width='1.00' height='1.00'/><rect x='539.75' y='61.00' width='1.00' height='1.00'/><rect x='541.75' y='61.00' width='1.00' height='1.00'/><rect x='541.75' y='235.00' width='1.00' height='2.00'/><rect x='544.75' y='61.00' width='1.00' height='1.00'/><rect x='544.75' y='235.00' width='1.00' height='3.00'/><rect x='546.75' y='235.00' width='1.00' height='3.00'/><rect x='548.75' y='61.00' width='1.00' height='1.00'/><rect x='548.75' y='235.00' width='1.00' height='3.00'/><rect x='550.75' y='235.00' width='1.00' height='2.00'/><rect x='553.50' y='62.00' width='7.25' height='173.00'/><rect x='555.50' y='235.00' width='1.00' height='2.00'/><rect x='591.50' y='62.00' width='42.25' height='173.00'/><rect x='591.50' y='60.00' width='1.00' height='2.00'/><rect x='593.50' y='60.00' width='1.00' height='2.00'/><rect x='598.50' y='60.00' width='1.00' height='2.00'/><rect x='601.50' y='235.00' width='1.00' height='1.00'/><rect x='612.50' y='60.00' width='1.00' height='2.00'/><rect x='612.50' y='235.00' width='1.00' height='2.00'/><rect x='615.50' y='60.00' width='1.00' height='2.00'/><rect x='618.50' y='61.00' width='1.00' height='1.00'/><rect x='621.50' y='61.00' width='1.00' height='1.00'/><rect x='626.50' y='235.00' width='1.00' height='1.00'/><rect x='629.50' y='60.00' width='1.00' height='2.00'/><rect x='631.50' y='235.00' width='1.00' height='2.00'/><rect x='771.75' y='62.00' width='41.25' height='173.00'/><rect x='771.75' y='60.00' width='1.00' height='2.00'/><rect x='774.75' y='235.00' width='1.00' height='2.00'/><rect x='778.75' y='235.00' width='1.00' height='2.00'/><rect x='780.75' y='61.00' width='1.00' height='1.00'/><rect x='782.75' y='235.00' width='1.00' height='1.00'/><rect x='785.75' y='60.00' width='1.00' height='2.00'/><rect x='787.75' y='61.00' width='1.00' height='1.00'/><rect x='795.75' y='60.00' width='1.00' height='2.00'/><rect x='798.75' y='235.00' width='1.00' height='1.00'/><rect x='800.75' y='235.00' width='1.00' height='3.00'/><rect x='803.75' y='60.00' width='1.00' height='2.00'/><rect x='803.75' y='235.00' width='1.00' height='2.00'/><rect x='806.75' y='61.00' width='1.00' height='1.00'/><rect x='808.75' y='235.00' width='1.00' height='2.00'/><rect x='811.75' y='61.00' width='1.00' height='1.00'/><rect x='819.20' y='62.00' width='3.00' height='173.00'/><rect x='819.20' y='60.00' width='1.00' height='2.00'/><rect x='819.20' y='235.00' width='1.00' height='1.00'/><rect x='836.80' y='62.00' width='1.80' height='173.00'/><rect x='836.80' y='235.00' width='1.00' height='3.00'/><rect x='856.00' y='62.00' width='39.50' height='173.00'/><rect x='856.00' y='61.00' width='1.00' height='1.00'/><rect x='856.00' y='235.00' width='1.00' height='2.00'/><rect x='861.00' y='60.00' width='1.00' height='2.00'/><rect x='864.00' y='235.00' width='1.00' height='2.00'/><rect x='870.00' y='61.00' width='1.00' height='1.00'/><rect x='872.00' y='60.00' width='1.00' height='2.00'/><rect x='872.00' y='235.00' width='1.00' height='2.00'/><rect x='875.00' y='235.00' width='1.00' height='3.00'/><rect x='877.00' y='235.00' width='1.00' height='1.00'/><rect x='879.00' y='235.00' width='1.00' height='1.00'/><rect x='884.00' y='235.00' width='1.00' height='1.00'/><rect x='887.00' y='60.00' width='1.00' height='2.00'/><rect x='892.00' y='235.00' width='1.00' height='3.00'/><rect x='894.00' y='235.00' width='1.00' height='2.00'/><rect x='276.50' y='53.00' width='1.20' height='11.00'/><rect x='331.80' y='40.00' width='1.20' height='24.00'/><rect x='762.20' y='40.00' width='1.20' height='24.00'/><rect x='634.50' y='56.00' width='1.20' height='8.00'/><rect x='309.50' y='235.00' width='1.20' height='17.00'/><rect x='337.00' y='235.00' width='1.20' height='15.00'/><rect x='805.00' y='235.00' width='1.20' height='17.00'/><rect x='839.00' y='235.00' width='1.20' height='19.00'/><rect x='157.00' y='69.00' width='1.20' height='7.00'/><rect x='238.00' y='69.00' width='1.20' height='5.00'/><rect x='330.00' y='69.00' width='1.20' height='7.00'/><rect x='434.00' y='69.00' width='1.20' height='6.00'/><rect x='704.00' y='69.00' width='1.20' height='5.00'/><rect x='880.00' y='69.00' width='1.20' height='4.00'/><rect x='548.00' y='235.00' width='1.20' height='6.00'/><rect x='600.00' y='235.00' width='1.20' height='5.00'/></g><g fill='#00f20a'><rect x='18.80' y='324.50' width='98.70' height='2.60'/><rect x='20.80' y='322.50' width='1.00' height='2.00'/><rect x='23.80' y='322.50' width='1.00' height='2.00'/><rect x='28.80' y='321.50' width='1.00' height='3.00'/><rect x='28.80' y='327.10' width='1.00' height='4.00'/><rect x='49.80' y='327.10' width='1.00' height='2.00'/><rect x='54.80' y='321.50' width='1.00' height='3.00'/><rect x='64.80' y='322.50' width='1.00' height='2.00'/><rect x='64.80' y='327.10' width='1.00' height='1.00'/><rect x='68.80' y='322.50' width='2.00' height='2.00'/><rect x='72.80' y='323.50' width='1.00' height='1.00'/><rect x='76.80' y='322.50' width='2.00' height='2.00'/><rect x='76.80' y='327.10' width='1.00' height='2.00'/><rect x='78.80' y='321.50' width='2.00' height='3.00'/><rect x='78.80' y='327.10' width='1.00' height='1.00'/><rect x='82.80' y='323.50' width='1.00' height='1.00'/><rect x='88.80' y='323.50' width='2.00' height='1.00'/><rect x='94.80' y='321.50' width='1.00' height='3.00'/><rect x='106.80' y='322.50' width='2.00' height='2.00'/><rect x='110.80' y='323.50' width='1.00' height='1.00'/><rect x='110.80' y='327.10' width='1.00' height='2.00'/><rect x='258.50' y='324.50' width='123.00' height='2.60'/><rect x='258.50' y='323.50' width='1.00' height='1.00'/><rect x='260.50' y='321.50' width='1.00' height='3.00'/><rect x='263.50' y='321.50' width='1.00' height='3.00'/><rect x='268.50' y='321.50' width='2.00' height='3.00'/><rect x='270.50' y='322.50' width='1.00' height='2.00'/><rect x='273.50' y='322.50' width='1.00' height='2.00'/><rect x='275.50' y='323.50' width='1.00' height='1.00'/><rect x='283.50' y='322.50' width='1.00' height='2.00'/><rect x='290.50' y='323.50' width='1.00' height='1.00'/><rect x='293.50' y='327.10' width='1.00' height='3.00'/><rect x='300.50' y='323.50' width='1.00' height='1.00'/><rect x='304.50' y='323.50' width='1.00' height='1.00'/><rect x='313.50' y='323.50' width='2.00' height='1.00'/><rect x='316.50' y='323.50' width='2.00' height='1.00'/><rect x='318.50' y='322.50' width='2.00' height='2.00'/><rect x='326.50' y='322.50' width='1.00' height='2.00'/><rect x='326.50' y='327.10' width='1.00' height='2.00'/><rect x='332.50' y='321.50' width='2.00' height='3.00'/><rect x='338.50' y='322.50' width='1.00' height='2.00'/><rect x='341.50' y='327.10' width='1.00' height='4.00'/><rect x='347.50' y='321.50' width='1.00' height='3.00'/><rect x='347.50' y='327.10' width='1.00' height='3.00'/><rect x='351.50' y='322.50' width='2.00' height='2.00'/><rect x='354.50' y='322.50' width='1.00' height='2.00'/><rect x='375.50' y='321.50' width='1.00' height='3.00'/><rect x='375.50' y='327.10' width='1.00' height='1.00'/><rect x='379.50' y='322.50' width='2.00' height='2.00'/><rect x='379.50' y='327.10' width='1.00' height='6.00'/><rect x='520.00' y='324.50' width='113.75' height='2.60'/><rect x='524.00' y='323.50' width='1.00' height='1.00'/><rect x='532.00' y='322.50' width='1.00' height='2.00'/><rect x='535.00' y='322.50' width='1.00' height='2.00'/><rect x='538.00' y='323.50' width='1.00' height='1.00'/><rect x='541.00' y='322.50' width='2.00' height='2.00'/><rect x='544.00' y='327.10' width='1.00' height='6.00'/><rect x='550.00' y='322.50' width='2.00' height='2.00'/><rect x='554.00' y='327.10' width='1.00' height='2.00'/><rect x='558.00' y='322.50' width='1.00' height='2.00'/><rect x='564.00' y='327.10' width='1.00' height='1.00'/><rect x='571.00' y='321.50' width='1.00' height='3.00'/><rect x='577.00' y='323.50' width='1.00' height='1.00'/><rect x='577.00' y='327.10' width='1.00' height='6.00'/><rect x='590.00' y='321.50' width='1.00' height='3.00'/><rect x='590.00' y='327.10' width='1.00' height='6.00'/><rect x='596.00' y='327.10' width='1.00' height='4.00'/><rect x='600.00' y='322.50' width='1.00' height='2.00'/><rect x='600.00' y='327.10' width='1.00' height='6.00'/><rect x='605.00' y='322.50' width='2.00' height='2.00'/><rect x='605.00' y='327.10' width='1.00' height='1.00'/><rect x='609.00' y='327.10' width='1.00' height='3.00'/><rect x='615.00' y='321.50' width='1.00' height='3.00'/><rect x='617.00' y='321.50' width='1.00' height='3.00'/><rect x='619.00' y='323.50' width='1.00' height='1.00'/><rect x='619.00' y='327.10' width='1.00' height='3.00'/><rect x='622.00' y='322.50' width='1.00' height='2.00'/><rect x='625.00' y='322.50' width='2.00' height='2.00'/><rect x='629.00' y='327.10' width='1.00' height='3.00'/><rect x='772.75' y='324.50' width='121.00' height='2.60'/><rect x='778.75' y='323.50' width='1.00' height='1.00'/><rect x='787.75' y='322.50' width='1.00' height='2.00'/><rect x='790.75' y='322.50' width='2.00' height='2.00'/><rect x='794.75' y='322.50' width='2.00' height='2.00'/><rect x='798.75' y='322.50' width='1.00' height='2.00'/><rect x='802.75' y='322.50' width='1.00' height='2.00'/><rect x='802.75' y='327.10' width='1.00' height='3.00'/><rect x='805.75' y='321.50' width='2.00' height='3.00'/><rect x='811.75' y='327.10' width='1.00' height='2.00'/><rect x='815.75' y='323.50' width='2.00' height='1.00'/><rect x='824.75' y='322.50' width='1.00' height='2.00'/><rect x='831.75' y='321.50' width='1.00' height='3.00'/><rect x='835.75' y='322.50' width='1.00' height='2.00'/><rect x='844.75' y='322.50' width='1.00' height='2.00'/><rect x='847.75' y='321.50' width='1.00' height='3.00'/><rect x='851.75' y='323.50' width='2.00' height='1.00'/><rect x='853.75' y='327.10' width='1.00' height='3.00'/><rect x='855.75' y='327.10' width='1.00' height='4.00'/><rect x='862.75' y='327.10' width='1.00' height='1.00'/><rect x='864.75' y='323.50' width='1.00' height='1.00'/><rect x='869.75' y='323.50' width='1.00' height='1.00'/><rect x='872.75' y='321.50' width='1.00' height='3.00'/><rect x='875.75' y='323.50' width='1.00' height='1.00'/><rect x='878.75' y='323.50' width='1.00' height='1.00'/><rect x='884.75' y='322.50' width='1.00' height='2.00'/><rect x='886.75' y='322.50' width='1.00' height='2.00'/><rect x='117.50' y='484.20' width='141.00' height='4.30'/><rect x='120.50' y='488.50' width='1.00' height='3.00'/><rect x='126.50' y='488.50' width='1.00' height='3.00'/><rect x='129.50' y='488.50' width='1.00' height='2.00'/><rect x='133.50' y='488.50' width='1.00' height='2.00'/><rect x='136.50' y='488.50' width='1.00' height='2.00'/><rect x='143.50' y='488.50' width='1.00' height='3.00'/><rect x='143.50' y='483.20' width='2.00' height='1.00'/><rect x='147.50' y='488.50' width='1.00' height='2.00'/><rect x='154.50' y='488.50' width='1.00' height='3.00'/><rect x='158.50' y='488.50' width='1.00' height='3.00'/><rect x='158.50' y='481.20' width='1.00' height='3.00'/><rect x='161.50' y='488.50' width='1.00' height='2.00'/><rect x='164.50' y='483.20' width='1.00' height='1.00'/><rect x='170.50' y='488.50' width='1.00' height='2.00'/><rect x='175.50' y='488.50' width='1.00' height='1.00'/><rect x='175.50' y='481.20' width='1.00' height='3.00'/><rect x='178.50' y='488.50' width='1.00' height='1.00'/><rect x='178.50' y='482.20' width='1.00' height='2.00'/><rect x='181.50' y='482.20' width='1.00' height='2.00'/><rect x='183.50' y='488.50' width='1.00' height='3.00'/><rect x='186.50' y='488.50' width='1.00' height='3.00'/><rect x='203.50' y='488.50' width='1.00' height='2.00'/><rect x='203.50' y='482.20' width='1.00' height='2.00'/><rect x='210.50' y='482.20' width='1.00' height='2.00'/><rect x='214.50' y='488.50' width='1.00' height='3.00'/><rect x='218.50' y='488.50' width='1.00' height='1.00'/><rect x='222.50' y='488.50' width='1.00' height='2.00'/><rect x='231.50' y='482.20' width='1.00' height='2.00'/><rect x='234.50' y='481.20' width='2.00' height='3.00'/><rect x='244.50' y='488.50' width='1.00' height='3.00'/><rect x='249.50' y='483.20' width='1.00' height='1.00'/><rect x='381.50' y='484.20' width='131.10' height='4.30'/><rect x='388.50' y='482.20' width='1.00' height='2.00'/><rect x='393.50' y='488.50' width='1.00' height='3.00'/><rect x='393.50' y='481.20' width='2.00' height='3.00'/><rect x='396.50' y='488.50' width='1.00' height='1.00'/><rect x='407.50' y='488.50' width='1.00' height='3.00'/><rect x='410.50' y='488.50' width='1.00' height='1.00'/><rect x='413.50' y='488.50' width='1.00' height='3.00'/><rect x='413.50' y='483.20' width='1.00' height='1.00'/><rect x='416.50' y='482.20' width='1.00' height='2.00'/><rect x='422.50' y='488.50' width='1.00' height='3.00'/><rect x='422.50' y='482.20' width='2.00' height='2.00'/><rect x='440.50' y='488.50' width='1.00' height='1.00'/><rect x='444.50' y='488.50' width='1.00' height='2.00'/><rect x='448.50' y='488.50' width='1.00' height='1.00'/><rect x='448.50' y='483.20' width='1.00' height='1.00'/><rect x='456.50' y='488.50' width='1.00' height='2.00'/><rect x='459.50' y='488.50' width='1.00' height='1.00'/><rect x='469.50' y='488.50' width='1.00' height='3.00'/><rect x='471.50' y='488.50' width='1.00' height='1.00'/><rect x='474.50' y='483.20' width='1.00' height='1.00'/><rect x='477.50' y='488.50' width='1.00' height='3.00'/><rect x='477.50' y='483.20' width='1.00' height='1.00'/><rect x='483.50' y='488.50' width='1.00' height='3.00'/><rect x='483.50' y='483.20' width='1.00' height='1.00'/><rect x='487.50' y='488.50' width='1.00' height='2.00'/><rect x='487.50' y='481.20' width='1.00' height='3.00'/><rect x='489.50' y='488.50' width='1.00' height='2.00'/><rect x='492.50' y='488.50' width='1.00' height='1.00'/><rect x='492.50' y='483.20' width='2.00' height='1.00'/><rect x='495.50' y='481.20' width='2.00' height='3.00'/><rect x='499.50' y='488.50' width='1.00' height='2.00'/><rect x='499.50' y='482.20' width='2.00' height='2.00'/><rect x='511.50' y='481.20' width='1.00' height='3.00'/><rect x='515.00' y='484.20' width='5.00' height='4.30'/><rect x='515.00' y='483.20' width='1.00' height='1.00'/><rect x='633.75' y='484.20' width='139.00' height='4.30'/><rect x='633.75' y='488.50' width='1.00' height='3.00'/><rect x='636.75' y='488.50' width='1.00' height='2.00'/><rect x='642.75' y='488.50' width='1.00' height='2.00'/><rect x='645.75' y='488.50' width='1.00' height='2.00'/><rect x='655.75' y='488.50' width='1.00' height='1.00'/><rect x='655.75' y='482.20' width='1.00' height='2.00'/><rect x='664.75' y='488.50' width='1.00' height='1.00'/><rect x='677.75' y='482.20' width='1.00' height='2.00'/><rect x='685.75' y='482.20' width='2.00' height='2.00'/><rect x='688.75' y='488.50' width='1.00' height='3.00'/><rect x='688.75' y='483.20' width='1.00' height='1.00'/><rect x='691.75' y='481.20' width='1.00' height='3.00'/><rect x='700.75' y='488.50' width='1.00' height='2.00'/><rect x='703.75' y='488.50' width='1.00' height='3.00'/><rect x='703.75' y='483.20' width='1.00' height='1.00'/><rect x='713.75' y='481.20' width='2.00' height='3.00'/><rect x='716.75' y='488.50' width='1.00' height='1.00'/><rect x='719.75' y='488.50' width='1.00' height='2.00'/><rect x='721.75' y='482.20' width='1.00' height='2.00'/><rect x='729.75' y='488.50' width='1.00' height='3.00'/><rect x='729.75' y='482.20' width='2.00' height='2.00'/><rect x='736.75' y='488.50' width='1.00' height='1.00'/><rect x='738.75' y='488.50' width='1.00' height='3.00'/><rect x='747.75' y='488.50' width='1.00' height='2.00'/><rect x='749.75' y='488.50' width='1.00' height='1.00'/><rect x='749.75' y='482.20' width='2.00' height='2.00'/><rect x='756.75' y='483.20' width='1.00' height='1.00'/><rect x='758.75' y='483.20' width='1.00' height='1.00'/><rect x='763.75' y='481.20' width='1.00' height='3.00'/><rect x='770.75' y='488.50' width='1.00' height='1.00'/><rect x='770.75' y='481.20' width='1.00' height='3.00'/><rect x='893.75' y='484.20' width='109.25' height='4.30'/><rect x='895.75' y='488.50' width='1.00' height='2.00'/><rect x='903.75' y='482.20' width='2.00' height='2.00'/><rect x='906.75' y='481.20' width='1.00' height='3.00'/><rect x='919.75' y='488.50' width='1.00' height='1.00'/><rect x='923.75' y='488.50' width='1.00' height='1.00'/><rect x='928.75' y='483.20' width='1.00' height='1.00'/><rect x='931.75' y='488.50' width='1.00' height='1.00'/><rect x='931.75' y='483.20' width='1.00' height='1.00'/><rect x='934.75' y='481.20' width='2.00' height='3.00'/><rect x='938.75' y='488.50' width='1.00' height='2.00'/><rect x='938.75' y='481.20' width='1.00' height='3.00'/><rect x='940.75' y='483.20' width='1.00' height='1.00'/><rect x='953.75' y='483.20' width='1.00' height='1.00'/><rect x='962.75' y='488.50' width='1.00' height='2.00'/><rect x='962.75' y='481.20' width='1.00' height='3.00'/><rect x='966.75' y='488.50' width='1.00' height='3.00'/><rect x='977.75' y='482.20' width='1.00' height='2.00'/><rect x='980.75' y='488.50' width='1.00' height='2.00'/><rect x='18.80' y='322.00' width='19.20' height='167.00'/><rect x='18.80' y='321.00' width='1.00' height='1.00'/><rect x='21.80' y='321.00' width='1.00' height='1.00'/><rect x='21.80' y='489.00' width='1.00' height='3.00'/><rect x='28.80' y='321.00' width='1.00' height='1.00'/><rect x='31.80' y='321.00' width='1.00' height='1.00'/><rect x='34.80' y='489.00' width='1.00' height='1.00'/><rect x='41.50' y='322.00' width='6.70' height='167.00'/><rect x='41.50' y='489.00' width='1.00' height='2.00'/><rect x='61.00' y='322.00' width='2.50' height='167.00'/><rect x='61.00' y='489.00' width='1.00' height='1.00'/><rect x='80.50' y='322.00' width='37.00' height='167.00'/><rect x='80.50' y='321.00' width='1.00' height='1.00'/><rect x='80.50' y='489.00' width='1.00' height='1.00'/><rect x='82.50' y='320.00' width='1.00' height='2.00'/><rect x='82.50' y='489.00' width='1.00' height='1.00'/><rect x='90.50' y='320.00' width='1.00' height='2.00'/><rect x='97.50' y='320.00' width='1.00' height='2.00'/><rect x='100.50' y='320.00' width='1.00' height='2.00'/><rect x='100.50' y='489.00' width='1.00' height='2.00'/><rect x='103.50' y='321.00' width='1.00' height='1.00'/><rect x='103.50' y='489.00' width='1.00' height='3.00'/><rect x='110.50' y='321.00' width='1.00' height='1.00'/><rect x='112.50' y='489.00' width='1.00' height='2.00'/><rect x='115.50' y='321.00' width='1.00' height='1.00'/><rect x='115.50' y='489.00' width='1.00' height='3.00'/><rect x='258.50' y='322.00' width='42.00' height='167.00'/><rect x='258.50' y='320.00' width='1.00' height='2.00'/><rect x='258.50' y='489.00' width='1.00' height='2.00'/><rect x='261.50' y='321.00' width='1.00' height='1.00'/><rect x='266.50' y='320.00' width='1.00' height='2.00'/><rect x='268.50' y='489.00' width='1.00' height='2.00'/><rect x='270.50' y='320.00' width='1.00' height='2.00'/><rect x='280.50' y='489.00' width='1.00' height='2.00'/><rect x='283.50' y='489.00' width='1.00' height='3.00'/><rect x='288.50' y='321.00' width='1.00' height='1.00'/><rect x='290.50' y='489.00' width='1.00' height='2.00'/><rect x='292.50' y='321.00' width='1.00' height='1.00'/><rect x='292.50' y='489.00' width='1.00' height='2.00'/><rect x='298.50' y='320.00' width='1.00' height='2.00'/><rect x='306.00' y='322.00' width='5.00' height='167.00'/><rect x='309.00' y='320.00' width='1.00' height='2.00'/><rect x='309.00' y='489.00' width='1.00' height='2.00'/><rect x='326.00' y='322.00' width='55.50' height='167.00'/><rect x='329.00' y='489.00' width='1.00' height='2.00'/><rect x='336.00' y='489.00' width='1.00' height='1.00'/><rect x='341.00' y='320.00' width='1.00' height='2.00'/><rect x='341.00' y='489.00' width='1.00' height='2.00'/><rect x='343.00' y='320.00' width='1.00' height='2.00'/><rect x='346.00' y='320.00' width='1.00' height='2.00'/><rect x='348.00' y='320.00' width='1.00' height='2.00'/><rect x='348.00' y='489.00' width='1.00' height='3.00'/><rect x='350.00' y='320.00' width='1.00' height='2.00'/><rect x='350.00' y='489.00' width='1.00' height='2.00'/><rect x='352.00' y='321.00' width='1.00' height='1.00'/><rect x='355.00' y='321.00' width='1.00' height='1.00'/><rect x='355.00' y='489.00' width='1.00' height='2.00'/><rect x='357.00' y='320.00' width='1.00' height='2.00'/><rect x='359.00' y='321.00' width='1.00' height='1.00'/><rect x='364.00' y='489.00' width='1.00' height='1.00'/><rect x='367.00' y='321.00' width='1.00' height='1.00'/><rect x='369.00' y='489.00' width='1.00' height='1.00'/><rect x='377.00' y='320.00' width='1.00' height='2.00'/><rect x='379.00' y='320.00' width='1.00' height='2.00'/><rect x='512.60' y='322.00' width='2.40' height='167.00'/><rect x='520.00' y='322.00' width='40.50' height='167.00'/><rect x='520.00' y='321.00' width='1.00' height='1.00'/><rect x='523.00' y='320.00' width='1.00' height='2.00'/><rect x='523.00' y='489.00' width='1.00' height='2.00'/><rect x='525.00' y='320.00' width='1.00' height='2.00'/><rect x='525.00' y='489.00' width='1.00' height='2.00'/><rect x='527.00' y='320.00' width='1.00' height='2.00'/><rect x='530.00' y='489.00' width='1.00' height='2.00'/><rect x='533.00' y='321.00' width='1.00' height='1.00'/><rect x='535.00' y='321.00' width='1.00' height='1.00'/><rect x='535.00' y='489.00' width='1.00' height='1.00'/><rect x='538.00' y='489.00' width='1.00' height='3.00'/><rect x='540.00' y='321.00' width='1.00' height='1.00'/><rect x='542.00' y='321.00' width='1.00' height='1.00'/><rect x='542.00' y='489.00' width='1.00' height='3.00'/><rect x='546.00' y='489.00' width='1.00' height='1.00'/><rect x='548.00' y='321.00' width='1.00' height='1.00'/><rect x='550.00' y='321.00' width='1.00' height='1.00'/><rect x='553.00' y='320.00' width='1.00' height='2.00'/><rect x='555.00' y='320.00' width='1.00' height='2.00'/><rect x='555.00' y='489.00' width='1.00' height='2.00'/><rect x='572.00' y='322.00' width='3.00' height='167.00'/><rect x='572.00' y='320.00' width='1.00' height='2.00'/><rect x='590.00' y='322.00' width='43.75' height='167.00'/><rect x='592.00' y='489.00' width='1.00' height='2.00'/><rect x='595.00' y='320.00' width='1.00' height='2.00'/><rect x='595.00' y='489.00' width='1.00' height='2.00'/><rect x='598.00' y='489.00' width='1.00' height='1.00'/><rect x='600.00' y='320.00' width='1.00' height='2.00'/><rect x='600.00' y='489.00' width='1.00' height='2.00'/><rect x='602.00' y='321.00' width='1.00' height='1.00'/><rect x='613.00' y='320.00' width='1.00' height='2.00'/><rect x='615.00' y='489.00' width='1.00' height='3.00'/><rect x='619.00' y='321.00' width='1.00' height='1.00'/><rect x='619.00' y='489.00' width='1.00' height='3.00'/><rect x='621.00' y='489.00' width='1.00' height='1.00'/><rect x='624.00' y='320.00' width='1.00' height='2.00'/><rect x='626.00' y='321.00' width='1.00' height='1.00'/><rect x='631.00' y='321.00' width='1.00' height='1.00'/><rect x='631.00' y='489.00' width='1.00' height='2.00'/><rect x='772.75' y='322.00' width='40.25' height='167.00'/><rect x='772.75' y='320.00' width='1.00' height='2.00'/><rect x='772.75' y='489.00' width='1.00' height='3.00'/><rect x='775.75' y='320.00' width='1.00' height='2.00'/><rect x='778.75' y='320.00' width='1.00' height='2.00'/><rect x='780.75' y='489.00' width='1.00' height='2.00'/><rect x='782.75' y='489.00' width='1.00' height='2.00'/><rect x='784.75' y='320.00' width='1.00' height='2.00'/><rect x='790.75' y='321.00' width='1.00' height='1.00'/><rect x='795.75' y='489.00' width='1.00' height='3.00'/><rect x='801.75' y='320.00' width='1.00' height='2.00'/><rect x='805.75' y='321.00' width='1.00' height='1.00'/><rect x='807.75' y='321.00' width='1.00' height='1.00'/><rect x='809.75' y='320.00' width='1.00' height='2.00'/><rect x='809.75' y='489.00' width='1.00' height='2.00'/><rect x='818.00' y='322.00' width='4.50' height='167.00'/><rect x='818.00' y='489.00' width='1.00' height='3.00'/><rect x='821.00' y='320.00' width='1.00' height='2.00'/><rect x='821.00' y='489.00' width='1.00' height='3.00'/><rect x='836.50' y='322.00' width='2.50' height='167.00'/><rect x='836.50' y='320.00' width='1.00' height='2.00'/><rect x='836.50' y='489.00' width='1.00' height='2.00'/><rect x='856.00' y='322.00' width='37.75' height='167.00'/><rect x='856.00' y='489.00' width='1.00' height='1.00'/><rect x='858.00' y='321.00' width='1.00' height='1.00'/><rect x='861.00' y='321.00' width='1.00' height='1.00'/><rect x='861.00' y='489.00' width='1.00' height='3.00'/><rect x='864.00' y='320.00' width='1.00' height='2.00'/><rect x='869.00' y='320.00' width='1.00' height='2.00'/><rect x='871.00' y='320.00' width='1.00' height='2.00'/><rect x='874.00' y='321.00' width='1.00' height='1.00'/><rect x='874.00' y='489.00' width='1.00' height='3.00'/><rect x='877.00' y='321.00' width='1.00' height='1.00'/><rect x='880.00' y='320.00' width='1.00' height='2.00'/><rect x='882.00' y='321.00' width='1.00' height='1.00'/><rect x='885.00' y='321.00' width='1.00' height='1.00'/><rect x='887.00' y='320.00' width='1.00' height='2.00'/><rect x='890.00' y='489.00' width='1.00' height='1.00'/><rect x='288.50' y='304.00' width='1.20' height='18.00'/><rect x='609.50' y='301.00' width='1.20' height='21.00'/><rect x='648.00' y='473.00' width='1.20' height='11.00'/><rect x='667.50' y='489.00' width='1.20' height='12.00'/><rect x='309.00' y='488.00' width='1.20' height='24.00'/><rect x='336.50' y='488.00' width='1.20' height='22.00'/><rect x='441.00' y='479.00' width='1.20' height='31.00'/><rect x='785.00' y='488.00' width='1.20' height='12.00'/><rect x='805.00' y='488.00' width='1.20' height='22.00'/><rect x='838.70' y='488.00' width='1.20' height='22.00'/><rect x='875.00' y='488.00' width='1.20' height='6.00'/><rect x='988.50' y='488.00' width='1.20' height='15.00'/><rect x='276.00' y='326.00' width='1.20' height='4.00'/></g><path d='M501 39.5 H522 C521.5 46 517 51.5 511.5 54 C506 51.5 501.5 46 501 39.5 Z' fill='#1aa6ee'/><rect x='511' y='53' width='1' height='10' fill='#f5f300'/><path d='M0 216 L8 216 L19 225.5 L14.5 230.5 L19 235.5 L9 245.5 L0 245.5 Z' fill='#f5f300'/><g fill='#111'><rect x='1.5' y='219.5' width='5' height='1.5'/><rect x='3.5' y='219.5' width='1.4' height='9.5'/><rect x='3.5' y='234.5' width='1.4' height='7'/><rect x='1.5' y='240' width='5' height='1.5'/></g><path d='M0 480 L10.2 480 L18.3 488.8 L10.2 498 L0 498 Z' fill='#00f20a'/><text x='0.4' y='494.9' font-size='17.5' font-family="Liberation Sans, sans-serif" fill='#0a5a0a' stroke='#0a5a0a' stroke-width='0.35'>2</text><text x='19.2' y='98.8' font-size='13.5' font-family="Liberation Sans, sans-serif" fill='#d2d2d2' stroke='#5a5040' stroke-width='0.7' paint-order='stroke' stroke-linejoin='round' letter-spacing='-0.15'>Bryan1</text><text x='19' y='119.5' font-size='10.6' font-family="Liberation Sans, sans-serif" fill='#d2d2d2' stroke='#5a5040' stroke-width='0.7' paint-order='stroke' stroke-linejoin='round' letter-spacing='0.08'>www.thebackshed.com</text><text x='19' y='134' font-size='10.4' font-family="Liberation Sans, sans-serif" fill='#d2d2d2' stroke='#5a5040' stroke-width='0.7' paint-order='stroke' stroke-linejoin='round'>2026-03-26</text><g fill='#0c7cff'><rect x='21.2' y='2.2' width='9.2' height='32.6' rx='1.2'/><rect x='39.6' y='2.2' width='8.4' height='32.6' rx='1.2'/><rect x='29' y='14.5' width='12' height='8.3' rx='0'/><path fill-rule='evenodd' d='M56.3 8.6 H73.3 Q77.3 8.6 77.3 12.6 V27.9 H82 V34.3 H56.3 Q52.3 34.3 52.3 30.3 V12.6 Q52.3 8.6 56.3 8.6 Z M62.3 14.9 H67.1 Q69 14.9 69 16.85 Q69 18.8 67.1 18.8 H62.3 Q60.6 18.8 60.4 18 H52.3 V17 H60.4 Q60.6 14.9 62.3 14.9 Z M61.9 24 H67.5 Q69 24 69 25.5 V28 Q69 29.5 67.5 29.5 H61.9 Q60.4 29.5 60.4 28 V25.5 Q60.4 24 61.9 24 Z'/><path d='M86 9 H102.8 Q106.8 9 106.8 13 V34.3 H98.1 V15.4 H91.1 V34.3 H82 V13 Q82 9 86 9 Z'/><path d='M110.7 3 H118.6 V9 H126.6 V15.1 H118.6 V28.3 H130.8 V34.3 H113.7 Q110.7 34.3 110.7 31.3 Z'/><path fill-rule='evenodd' d='M135.5 9 H154.6 Q158.6 9 158.6 13 V25.3 H138.7 V28.3 H160.5 V34.3 H130.5 V14 Q130.5 9 135.5 9 Z M141.1 14.5 H147.1 Q149.5 14.5 149.5 16.9 Q149.5 19.3 147.1 19.3 H141.1 Q138.7 19.3 138.7 16.9 Q138.7 14.5 141.1 14.5 Z'/><path d='M160.1 2.7 H168 V15.9 L175.5 9 H185.4 L176.3 20.6 L185.7 34.3 H175.5 L168 24.2 V34.3 H160.1 Z'/></g><rect x='211' y='6' width='87.3' height='29.2' rx='3' fill='#00ec0a'/><text x='254.6' y='28.8' font-size='23' font-weight='bold' text-anchor='middle' font-family="Liberation Sans, sans-serif" fill='#101010'>TD</text><rect x='320.2' y='6' width='25.3' height='29.5' rx='3' fill='#1ed0e6'/><text x='333.2' y='29.8' font-size='26.5' font-weight='bold' text-anchor='middle' font-family="Liberation Sans, sans-serif" fill='#0c1418'>H</text><rect x='710.8' y='6' width='25.3' height='29.5' rx='3' fill='#1ed0e6'/><text x='723.6' y='29.8' font-size='26.5' font-weight='bold' text-anchor='middle' font-family="Liberation Sans, sans-serif" fill='#0c1418'>D</text><rect x='857.8' y='6' width='25.3' height='29.5' rx='3' fill='#1ed0e6'/><text x='870.8' y='29.8' font-size='26.5' font-weight='bold' text-anchor='middle' font-family="Liberation Sans, sans-serif" fill='#0c1418'>T</text><text x='372.5' y='28.6' font-size='21.5' font-family="Liberation Sans, sans-serif" fill='#ffffff' stroke='#ffffff' stroke-width='0.3' letter-spacing='1.6'>5ms</text><text x='463' y='28.6' font-size='21.5' font-family="Liberation Sans, sans-serif" fill='#ffffff' stroke='#ffffff' stroke-width='0.3' letter-spacing='1.55'>50.00KSa/s</text><text x='618.5' y='28.6' font-size='21.5' font-family="Liberation Sans, sans-serif" fill='#ffffff' stroke='#ffffff' stroke-width='0.3' letter-spacing='2.6'>4Kpt</text><text x='765.3' y='28.6' font-size='21.5' font-family="Liberation Sans, sans-serif" fill='#ffffff' stroke='#ffffff' stroke-width='0.3' letter-spacing='1.1'>0.00s</text><text x='888.6' y='31' font-size='21.5' font-family="Liberation Sans, sans-serif" fill='#f2ea10' stroke='#f2ea10' stroke-width='0.3' letter-spacing='1.25'>800mV</text><rect x='20' y='560.2' width='254.3' height='46.3' rx='3' fill='#f5f300'/><rect x='282.5' y='560.2' width='254' height='46.3' rx='3' fill='#00f20a'/><rect x='545' y='559.8' width='255' height='46.8' rx='3' fill='#ff007a'/><path d='M32 577 L39 571.2 H41.8 V597.3 H38.3 V576.5 L32 580.6 Z' fill='#111'/><text x='0' y='597.5' font-size='32' font-family="Liberation Sans, sans-serif" fill='#111' stroke='#111' stroke-width='1.1' transform='translate(49,0) scale(0.78,1)'>DC</text><text x='270' y='597.6' font-size='30.4' text-anchor='end' font-family="Liberation Sans, sans-serif" fill='#111' stroke='#111' stroke-width='0.4'>5V</text><text x='289.0' y='597.3' font-size='37.5' font-family="Liberation Sans, sans-serif" fill='#111' stroke='#111' stroke-width='0.7'>2</text><text x='0' y='597.5' font-size='32' font-family="Liberation Sans, sans-serif" fill='#111' stroke='#111' stroke-width='1.1' transform='translate(311.5,0) scale(0.78,1)'>DC</text><text x='532.5' y='597.6' font-size='30.4' text-anchor='end' font-family="Liberation Sans, sans-serif" fill='#111' stroke='#111' stroke-width='0.4'>5V</text><text x='551.5' y='597.3' font-size='37' font-family="Liberation Sans, sans-serif" fill='#2a0010' stroke='#2a0010' stroke-width='0.6'>G</text><path d='M598.5 572 V565 H620 V578 H642.5 V570.5' fill='none' stroke='#2a0010' stroke-width='2.6'/><text x='673' y='580.6' font-size='21' font-weight='bold' font-family="Liberation Sans, sans-serif" fill='#2a0010' stroke='#2a0010' stroke-width='0.5' letter-spacing='2.4'>1.00KHz</text><text x='596.5' y='600.9' font-size='21' font-weight='bold' font-family="Liberation Sans, sans-serif" fill='#2a0010' stroke='#2a0010' stroke-width='0.5' letter-spacing='2.4'>1.50Vpp 0mv</text><path d='M817 579.2 H831.6 L827.1 600.2 H817 C810 600.2 807.2 594 807.2 589.7 C807.2 585 810 579.2 817 579.2 Z' fill='#2c64e6'/><path fill-rule='evenodd' d='M832.7 582.5 H840.7 L838.8 597.7 H829.9 Z M834.3 585.3 H837.1 L836.7 588 H833.9 Z M833.5 592.5 H836.5 L836.1 595.3 H833.1 Z' fill='#f0f0f0'/></svg></body></html>
